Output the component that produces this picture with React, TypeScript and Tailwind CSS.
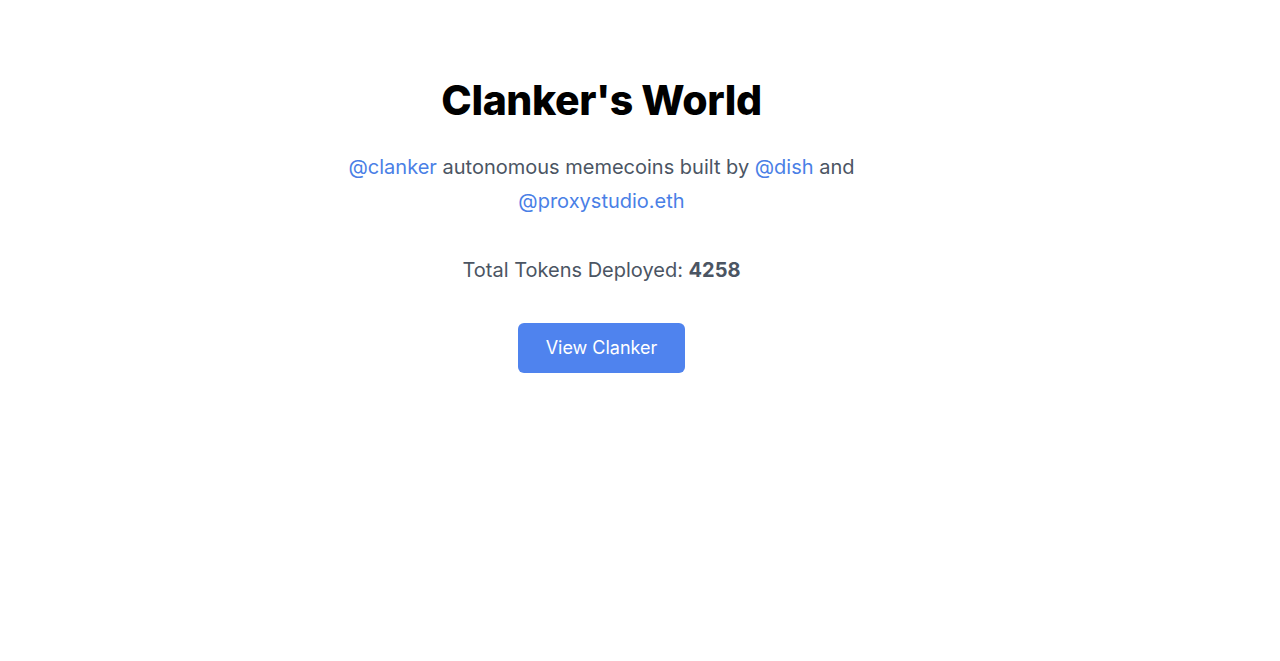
export default function App() {
  return (
    <div
      className="min-h-screen bg-white pr-[77px]"
      style={{ fontFamily: "Inter, 'Noto Sans', sans-serif" }}
    >
      <div className="mx-auto flex max-w-lg flex-col items-center pt-[76px] text-center">
        <h1 className="text-[41px] font-extrabold leading-[48px] tracking-[-0.01em] text-black">
          Clanker's World
        </h1>
        <p className="mt-[26px] text-xl leading-[34px] text-[#4b5563]">
          <a className="text-[#4a7fe6]">@clanker</a> autonomous memecoins built by{" "}
          <a className="text-[#4a7fe6]">@dish</a> and{" "}
          <a className="text-[#4a7fe6]">@proxystudio.eth</a>
        </p>
        <p className="mt-[35px] text-xl leading-[34px] text-[#4b5563]">
          Total Tokens Deployed: <span className="font-bold">4258</span>
        </p>
        <button className="mt-[36px] h-[50px] w-[167px] rounded-md bg-[#4f83ee] text-lg text-white">
          View Clanker
        </button>
      </div>
    </div>
  );
}
